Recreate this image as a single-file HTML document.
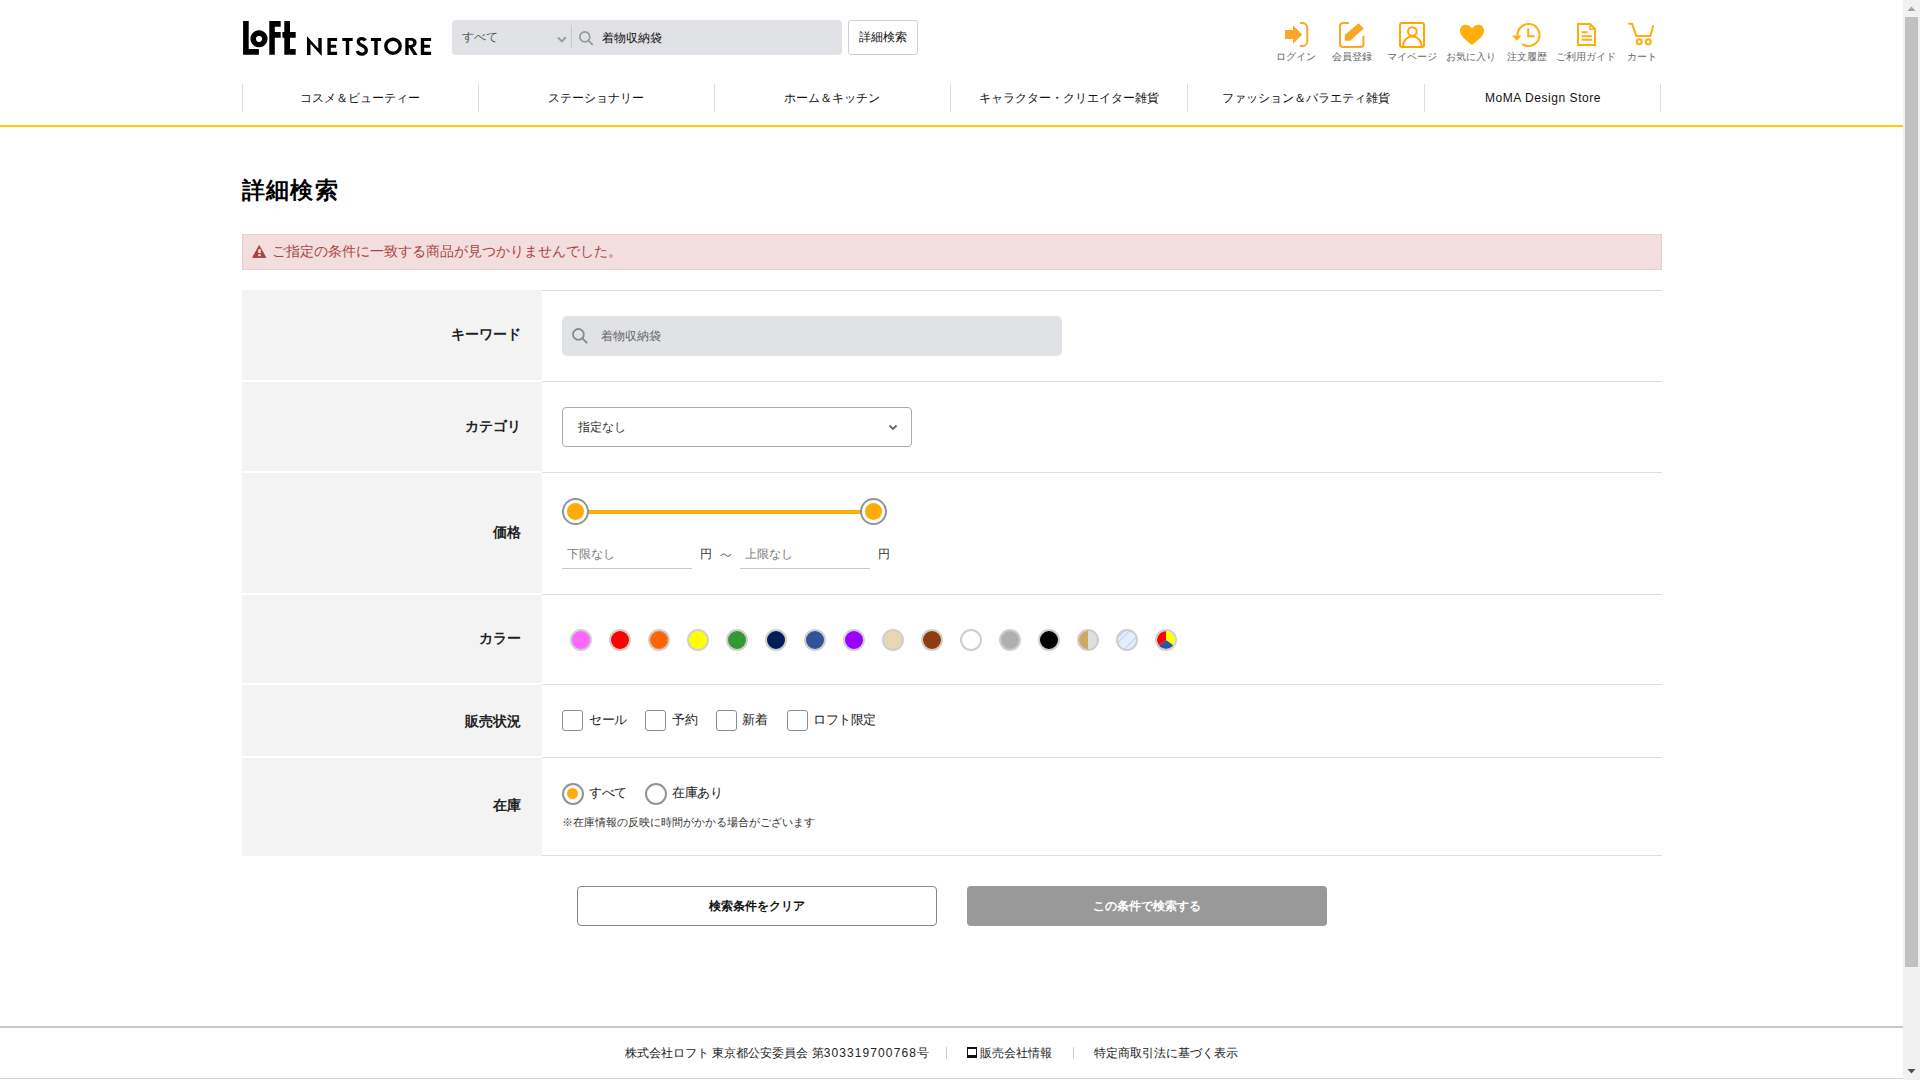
<!DOCTYPE html>
<html lang="ja">
<head>
<meta charset="utf-8">
<title>詳細検索 | ロフト公式通販サイト</title>
<style>
*{box-sizing:border-box;margin:0;padding:0}
html,body{width:1920px;height:1080px;overflow:hidden;background:#fff}
body{font-family:"Liberation Sans",sans-serif;color:#333;position:relative}
.a{position:absolute}
.t{position:absolute;white-space:nowrap;line-height:1}
/* header */
.sbox{left:452px;top:20px;width:390px;height:35px;background:#e1e2e6;border-radius:4px}
.dbtn{left:848px;top:20px;width:70px;height:35px;border:1px solid #d0d0d0;border-radius:3px;background:#fff;font-size:12px;color:#111;text-align:center;line-height:33px}
.ico{position:absolute;top:0;}
.ilab{position:absolute;top:52px;font-size:10px;color:#666;white-space:nowrap;line-height:10px;transform:translateX(-50%)}
.nsep{position:absolute;top:84px;width:1px;height:28px;background:#ddd}
.nav{position:absolute;top:92px;font-size:12px;color:#111;white-space:nowrap;line-height:13px;transform:translateX(-50%)}
.yl{left:0;top:125px;width:1903px;height:2px;background:#fc0}
/* content */
.h1{left:242px;top:179px;font-size:23px;font-weight:bold;color:#000;line-height:23px;letter-spacing:1.2px}
.alert{left:242px;top:234px;width:1420px;height:36px;background:#f2dede;border:1px solid #ebccd1}
.th{position:absolute;left:242px;width:300px;background:#f3f3f3}
.hl{position:absolute;left:542px;width:1120px;height:1px;background:#ddd}
.lab{position:absolute;right:1399px;font-size:14px;font-weight:bold;color:#222;white-space:nowrap;line-height:14px}
.cbox{position:absolute;top:710px;width:21px;height:21px;border:1px solid #8c8c8c;border-radius:3px;background:#fff}
.clab{position:absolute;top:713px;font-size:13px;color:#222;line-height:13px;white-space:nowrap;letter-spacing:-0.5px}
.sw{position:absolute;top:629px;width:22px;height:22px;border-radius:50%;border:2px solid #cfcfcf}
</style>
</head>
<body>
<!-- ===== HEADER ===== -->
<svg class="a" style="left:240px;top:18px" width="60" height="40" viewBox="240 18 60 40">
  <g fill="#000">
    <path d="M243.1 21.1 H248.7 V48.9 H258.9 V54.7 H243.1 Z"/>
    <path fill-rule="evenodd" d="M259 30.25 A8.55 8.55 0 1 1 258.99 30.25 Z M259 35.8 A3.05 3.05 0 1 0 259.01 35.8 Z"/>
    <path d="M269.3 21.1 H280.7 V26.7 H274.8 V32.1 H280.7 V37.8 H274.8 V54.7 H269.3 Z"/>
    <path d="M284.3 21.1 H290 V32.1 H295.7 V37.8 H290 V48.9 H295.7 V54.7 H284.3 V37.8 H282.4 V32.1 H284.3 Z"/>
  </g>
</svg>
<svg class="a" style="left:300px;top:30px" width="140" height="30" viewBox="300 30 140 30">
  <g fill="#000">
    <path d="M307 54.9 V36.2 L318.3 48.6 V38 H321.7 V56 L310.5 43.8 V54.9 Z"/>
    <path d="M327.4 38 H337.1 V41 H330.8 V44.8 H336.2 V47.7 H330.8 V51.8 H337.1 V54.9 H327.4 Z"/>
    <path d="M342.3 38 H352.7 V41 H349.2 V54.9 H345.8 V41 H342.3 Z"/>
    <path d="M370.9 38 H381.1 V41 H377.7 V54.9 H374.3 V41 H370.9 Z"/>
    <path d="M420.8 38 H431.1 V41 H424.2 V44.8 H429.9 V47.7 H424.2 V51.8 H431.1 V54.9 H420.8 Z"/>
    <path fill-rule="evenodd" d="M405.3 38 H410.8 C414.3 38 416.6 39.6 416.6 42.6 C416.6 45 415.1 46.8 412.8 47.4 L417.6 54.9 H413.6 L409.2 47.7 H408.7 V54.9 H405.3 Z M408.7 40.5 V44.9 H410.6 C412.2 44.9 413.2 44 413.2 42.7 C413.2 41.4 412.2 40.5 410.6 40.5 Z"/>
  </g>
  <g fill="none" stroke="#000">
    <path d="M365.3 40.6 C364.6 39.3 363.3 38.7 361.8 38.7 C359.7 38.7 358.3 40 358.3 41.8 C358.3 46.2 366.3 45 366.3 50.2 C366.3 52.5 364.4 54.2 361.7 54.2 C359.6 54.2 358 53.1 357.2 51" stroke-width="3.3"/>
    <ellipse cx="393" cy="46.2" rx="7.2" ry="7" stroke-width="3.4"/>
  </g>
</svg>

<div class="a sbox"></div>
<div class="t" style="left:462px;top:31px;font-size:12px;color:#555">すべて</div>
<svg class="a" style="left:557px;top:35px" width="10" height="9" viewBox="0 0 10 9"><path d="M1 2.5 L4.9 6.4 L8.7 2.3" fill="none" stroke="#999" stroke-width="2"/></svg>
<div class="a" style="left:571px;top:25px;width:1px;height:23px;background:#c8c8c8"></div>
<svg class="a" style="left:578px;top:29px" width="17" height="18" viewBox="0 0 17 18"><circle cx="6.8" cy="7.9" r="5" fill="none" stroke="#9a9a9a" stroke-width="1.7"/><path d="M10.5 11.6 L14.2 15.3" stroke="#9a9a9a" stroke-width="1.9" stroke-linecap="round"/></svg>
<div class="t" style="left:602px;top:32px;font-size:12px;color:#111">着物収納袋</div>
<div class="a dbtn">詳細検索</div>

<!-- header icons -->
<svg class="a" style="left:1270px;top:15px" width="400" height="40" viewBox="1270 15 400 40">
  <g fill="#f8a726">
    <!-- login -->
    <path d="M1285 30 H1293 V25.2 L1302.3 34.5 L1293 43.8 V38.9 H1285 Z"/>
    <path d="M1300 23 H1302.5 A4.8 4.8 0 0 1 1307.3 27.8 V41.2 A4.8 4.8 0 0 1 1302.5 46 H1300" fill="none" stroke="#f8a726" stroke-width="1.9"/>
    <!-- register -->
    <path d="M1348.8 23 H1343 A3 3 0 0 0 1340 26 V44 A3 3 0 0 0 1343 47 H1360.5 A3 3 0 0 0 1363.5 44 V35.8" fill="none" stroke="#f8a726" stroke-width="2"/>
    <path d="M1344.8 40.7 V35 L1358.5 23.2 L1363.8 28.4 L1350.2 40.7 Z"/>
  </g>
  <g fill="none" stroke="#ffa600" stroke-width="2">
    <!-- mypage -->
    <rect x="1400" y="23" width="24" height="24" rx="2"/>
    <circle cx="1412.3" cy="31.6" r="4.3"/>
    <path d="M1403 46 A9.3 9.6 0 0 1 1421.6 46"/>
  </g>
  <!-- heart -->
  <path fill="#ffae0d" d="M1472 45 C1466 40 1460 36 1460 30.5 C1460 27 1462.5 24.7 1465.5 24.7 C1468.3 24.7 1470.5 26.3 1472 28.4 C1473.5 26.3 1475.7 24.7 1478.5 24.7 C1481.5 24.7 1484 27 1484 30.5 C1484 36 1478 40 1472 45 Z"/>
  <!-- history -->
  <g fill="none" stroke="#ffae0d" stroke-width="2">
    <path d="M1517.54 35.96 A11 11 0 1 1 1522.35 44.12"/>
    <path d="M1528.2 28.3 V36.2 H1534.6"/>
  </g>
  <path fill="#ffae0d" d="M1512.2 35.6 H1521.4 L1516.8 40.8 Z"/>
  <!-- guide -->
  <g fill="none" stroke="#ffae0d" stroke-width="2">
    <path d="M1578 24 H1590 L1595 29 V45 H1578 Z"/>
    <path d="M1581.5 32.2 H1587.5 M1581.5 36.2 H1592 M1581.5 39.8 H1592"/>
  </g>
  <path fill="none" stroke="#ffae0d" stroke-width="1.6" d="M1590 24.5 V29 H1594.5"/>
  <!-- cart -->
  <g fill="none" stroke="#ffae0d" stroke-width="2">
    <path d="M1628.3 23.8 H1632.1 L1636.3 35.9 H1650.4 L1653.3 25.3"/>
    <circle cx="1639.2" cy="41.75" r="2.5"/>
    <circle cx="1648.3" cy="41.75" r="2.5"/>
  </g>
</svg>
<div class="ilab" style="left:1296px">ログイン</div>
<div class="ilab" style="left:1351.5px">会員登録</div>
<div class="ilab" style="left:1411.5px">マイページ</div>
<div class="ilab" style="left:1471px">お気に入り</div>
<div class="ilab" style="left:1526.5px">注文履歴</div>
<div class="ilab" style="left:1586px">ご利用ガイド</div>
<div class="ilab" style="left:1641.5px">カート</div>

<!-- nav -->
<div class="nsep" style="left:242px"></div>
<div class="nsep" style="left:478px"></div>
<div class="nsep" style="left:714px"></div>
<div class="nsep" style="left:950px"></div>
<div class="nsep" style="left:1187px"></div>
<div class="nsep" style="left:1424px"></div>
<div class="nsep" style="left:1660px"></div>
<div class="nav" style="left:360px">コスメ＆ビューティー</div>
<div class="nav" style="left:596px">ステーショナリー</div>
<div class="nav" style="left:832px">ホーム＆キッチン</div>
<div class="nav" style="left:1068.5px">キャラクター・クリエイター雑貨</div>
<div class="nav" style="left:1305.5px">ファッション＆バラエティ雑貨</div>
<div class="nav" style="left:1543px;letter-spacing:0.55px">MoMA Design Store</div>
<div class="a yl"></div>


<!-- CONTENT -->
<div class="t h1">詳細検索</div>
<div class="a alert"></div>
<svg class="a" style="left:250px;top:243px" width="20" height="18" viewBox="250 243 20 18"><path d="M259.2 245.6 L265.8 257.5 H252.6 Z" fill="#a94442" stroke="#a94442" stroke-width="0.9" stroke-linejoin="round"/><rect x="258.2" y="249.2" width="2.6" height="3.8" fill="#f2dede"/><rect x="258.2" y="254.3" width="2.6" height="1.8" fill="#f2dede"/></svg>
<div class="t" style="left:272px;top:244px;font-size:14px;color:#a94442">ご指定の条件に一致する商品が見つかりませんでした。</div>

<div class="th" style="top:290px;height:90px"></div>
<div class="th" style="top:382px;height:89px"></div>
<div class="th" style="top:473px;height:120px"></div>
<div class="th" style="top:595px;height:88px"></div>
<div class="th" style="top:685px;height:71px"></div>
<div class="th" style="top:758px;height:98px"></div>
<div class="hl" style="top:290px"></div>
<div class="hl" style="top:381px"></div>
<div class="hl" style="top:472px"></div>
<div class="hl" style="top:594px"></div>
<div class="hl" style="top:684px"></div>
<div class="hl" style="top:757px"></div>
<div class="hl" style="top:855px"></div>

<div class="lab" style="top:327px">キーワード</div>
<div class="lab" style="top:419px">カテゴリ</div>
<div class="lab" style="top:525px">価格</div>
<div class="lab" style="top:631px">カラー</div>
<div class="lab" style="top:714px">販売状況</div>
<div class="lab" style="top:798px">在庫</div>

<!-- keyword input -->
<div class="a" style="left:562px;top:316px;width:500px;height:40px;background:#e1e2e6;border-radius:5px"></div>
<svg class="a" style="left:570px;top:326px" width="20" height="20" viewBox="0 0 20 20"><circle cx="8.4" cy="8.4" r="5.4" fill="none" stroke="#888" stroke-width="1.8"/><path d="M12.4 12.4 L16.6 16.6" stroke="#888" stroke-width="2" stroke-linecap="round"/></svg>
<div class="t" style="left:601px;top:330px;font-size:12px;color:#666">着物収納袋</div>

<!-- category select -->
<div class="a" style="left:562px;top:407px;width:350px;height:40px;border:1px solid #aaa;border-radius:4px;background:#fff"></div>
<div class="t" style="left:578px;top:421px;font-size:12px;color:#333">指定なし</div>
<svg class="a" style="left:888px;top:423px" width="10" height="9" viewBox="0 0 10 9"><path d="M1.5 2.5 L5 6 L8.5 2.5" fill="none" stroke="#666" stroke-width="1.8"/></svg>

<!-- price slider -->
<div class="a" style="left:580px;top:510px;width:290px;height:4px;background:#ffab0a"></div>
<div class="a" style="left:562px;top:498px;width:27px;height:27px;border-radius:50%;border:2px solid #939393;background:#fff"></div>
<div class="a" style="left:567px;top:503px;width:17px;height:17px;border-radius:50%;background:#ffab0a"></div>
<div class="a" style="left:860px;top:498px;width:27px;height:27px;border-radius:50%;border:2px solid #939393;background:#fff"></div>
<div class="a" style="left:865px;top:503px;width:17px;height:17px;border-radius:50%;background:#ffab0a"></div>
<div class="t" style="left:567px;top:548px;font-size:12px;color:#777">下限なし</div>
<div class="a" style="left:562px;top:568px;width:130px;height:1px;background:#c8c8c8"></div>
<div class="t" style="left:700px;top:548px;font-size:12px;color:#333">円</div>
<svg class="a" style="left:720px;top:551px" width="12" height="8" viewBox="0 0 12 8"><path d="M0.8 5 C2.2 2.6 4 2.6 5.8 4.2 C7.6 5.8 9.4 5.8 11 3.2" fill="none" stroke="#444" stroke-width="1"/></svg>
<div class="t" style="left:745px;top:548px;font-size:12px;color:#777">上限なし</div>
<div class="a" style="left:740px;top:568px;width:130px;height:1px;background:#c8c8c8"></div>
<div class="t" style="left:878px;top:548px;font-size:12px;color:#333">円</div>


<!-- colors -->
<div class="sw" style="left:570px;background:#ff66ff"></div>
<div class="sw" style="left:609px;background:#ff0000"></div>
<div class="sw" style="left:648px;background:#ff6600"></div>
<div class="sw" style="left:687px;background:#ffff00"></div>
<div class="sw" style="left:726px;background:#339933"></div>
<div class="sw" style="left:765px;background:#001f5c"></div>
<div class="sw" style="left:804px;background:#305496"></div>
<div class="sw" style="left:843px;background:#9900ff"></div>
<div class="sw" style="left:882px;background:#e8d6b5"></div>
<div class="sw" style="left:921px;background:#8b3f0f"></div>
<div class="sw" style="left:960px;background:#ffffff"></div>
<div class="sw" style="left:999px;background:#b0b0b0"></div>
<div class="sw" style="left:1038px;background:#000000"></div>
<div class="sw" style="left:1077px;background:linear-gradient(90deg,#cfa960 50%,#dedede 50%)"></div>
<div class="sw" style="left:1116px;background:linear-gradient(135deg,#c6dbf8 0 22%,#e3eefc 22% 30%,#c6dbf8 30% 36%,#e3eefc 36% 64%,#c6dbf8 64% 72%,#e3eefc 72% 100%)"></div>
<div class="sw" style="left:1155px;background:#fff;overflow:hidden"><svg width="18" height="18" viewBox="-9 -9 18 18" style="display:block"><path d="M0 0 L0 -9 A9 9 0 0 1 7.37 5.16 Z" fill="#ffff00"/><path d="M0 0 L7.37 5.16 A9 9 0 0 1 -7.37 5.16 Z" fill="#305496"/><path d="M0 0 L-7.37 5.16 A9 9 0 0 1 0 -9 Z" fill="#ff0000"/></svg></div>

<!-- checkboxes -->
<div class="cbox" style="left:562px"></div><div class="clab" style="left:589px">セール</div>
<div class="cbox" style="left:645px"></div><div class="clab" style="left:672px">予約</div>
<div class="cbox" style="left:716px"></div><div class="clab" style="left:742px">新着</div>
<div class="cbox" style="left:787px"></div><div class="clab" style="left:813px">ロフト限定</div>

<!-- radios -->
<div class="a" style="left:562px;top:783px;width:22px;height:22px;border-radius:50%;border:2.5px solid #939393;background:#fff"></div>
<div class="a" style="left:567px;top:788px;width:11px;height:11px;border-radius:50%;background:#ffab0a"></div>
<div class="clab" style="left:589px;top:786px">すべて</div>
<div class="a" style="left:645px;top:783px;width:22px;height:22px;border-radius:50%;border:2.5px solid #939393;background:#fff"></div>
<div class="clab" style="left:672px;top:786px">在庫あり</div>
<div class="t" style="left:562px;top:817px;font-size:11px;color:#333">※在庫情報の反映に時間がかかる場合がございます</div>

<!-- buttons -->
<div class="a" style="left:577px;top:886px;width:360px;height:40px;border:1px solid #888;border-radius:4px;background:#fff;text-align:center;line-height:38px;font-size:12px;font-weight:bold;color:#111">検索条件をクリア</div>
<div class="a" style="left:967px;top:886px;width:360px;height:40px;border-radius:4px;background:#999;text-align:center;line-height:40px;font-size:12px;font-weight:bold;color:#fff">この条件で検索する</div>

<!-- footer -->
<div class="a" style="left:0;top:1026px;width:1903px;height:2px;background:#c8c8c8"></div>
<div class="a" style="left:0;top:1078px;width:1903px;height:1px;background:#d5d5d5"></div>
<div class="t" style="left:625px;top:1047px;font-size:12px;color:#222">株式会社ロフト 東京都公安委員会 第<span style="letter-spacing:1.1px">303319700768</span>号</div>
<div class="a" style="left:946px;top:1047px;width:1px;height:12px;background:#ccc"></div>
<div class="a" style="left:967px;top:1047px;width:10px;height:11px;border:1.5px solid #111;border-top-width:2px;border-bottom-width:3px"></div>
<div class="t" style="left:980px;top:1047px;font-size:12px;color:#222">販売会社情報</div>
<div class="a" style="left:1073px;top:1047px;width:1px;height:12px;background:#ccc"></div>
<div class="t" style="left:1094px;top:1047px;font-size:12px;color:#222">特定商取引法に基づく表示</div>

<!-- scrollbar -->
<div class="a" style="left:1903px;top:0;width:17px;height:1080px;background:#f1f1f1"></div>
<div class="a" style="left:1905px;top:17px;width:13px;height:950px;background:#c1c1c1"></div>
<svg class="a" style="left:1903px;top:0" width="17" height="17" viewBox="0 0 17 17"><path d="M4.5 11 L8.5 6.5 L12.5 11 Z" fill="#a3a3a3"/></svg>
<svg class="a" style="left:1903px;top:1063px" width="17" height="17" viewBox="0 0 17 17"><path d="M4.5 6 L8.5 10.5 L12.5 6 Z" fill="#505050"/></svg>

</body>
</html>
